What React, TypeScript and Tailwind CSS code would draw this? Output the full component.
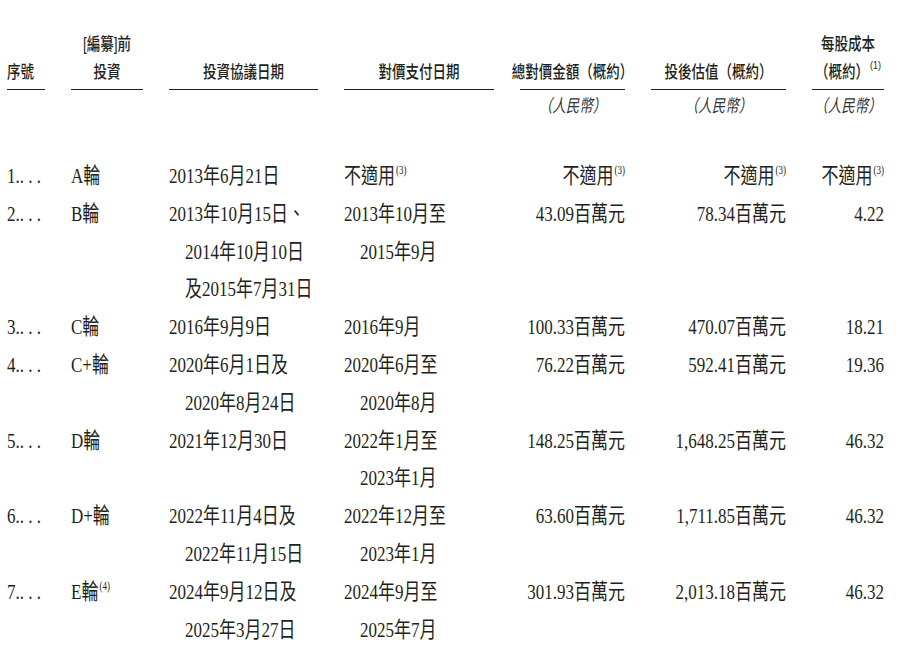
import type { ReactNode } from "react";

const serif = "font-['Liberation_Serif','Noto_Sans_CJK_TC',serif]";
const sans = "font-['Liberation_Sans','Noto_Sans_CJK_TC',sans-serif]";
const cols =
  "grid grid-cols-[38px_72px_149px_150px_105px_135px_72px] gap-x-[26px]";

function Sup({ children }: { children: ReactNode }) {
  return (
    <span className="relative -top-[7px] ml-px align-baseline text-[9px] font-normal leading-none">
      {children}
    </span>
  );
}

const na = (
  <>
    不適用<Sup>(3)</Sup>
  </>
);

type Row = {
  no: string;
  round: ReactNode;
  agree: string[];
  pay: ReactNode[];
  total: ReactNode;
  value: ReactNode;
  cost: ReactNode;
};

const rows: Row[] = [
  {
    no: "1",
    round: "A輪",
    agree: ["2013年6月21日"],
    pay: [na],
    total: na,
    value: na,
    cost: na,
  },
  {
    no: "2",
    round: "B輪",
    agree: ["2013年10月15日、", "2014年10月10日", "及2015年7月31日"],
    pay: ["2013年10月至", "2015年9月"],
    total: "43.09百萬元",
    value: "78.34百萬元",
    cost: "4.22",
  },
  {
    no: "3",
    round: "C輪",
    agree: ["2016年9月9日"],
    pay: ["2016年9月"],
    total: "100.33百萬元",
    value: "470.07百萬元",
    cost: "18.21",
  },
  {
    no: "4",
    round: "C+輪",
    agree: ["2020年6月1日及", "2020年8月24日"],
    pay: ["2020年6月至", "2020年8月"],
    total: "76.22百萬元",
    value: "592.41百萬元",
    cost: "19.36",
  },
  {
    no: "5",
    round: "D輪",
    agree: ["2021年12月30日"],
    pay: ["2022年1月至", "2023年1月"],
    total: "148.25百萬元",
    value: "1,648.25百萬元",
    cost: "46.32",
  },
  {
    no: "6",
    round: "D+輪",
    agree: ["2022年11月4日及", "2022年11月15日"],
    pay: ["2022年12月至", "2023年1月"],
    total: "63.60百萬元",
    value: "1,711.85百萬元",
    cost: "46.32",
  },
  {
    no: "7",
    round: (
      <>
        E輪<Sup>(4)</Sup>
      </>
    ),
    agree: ["2024年9月12日及", "2025年3月27日"],
    pay: ["2024年9月至", "2025年7月"],
    total: "301.93百萬元",
    value: "2,013.18百萬元",
    cost: "46.32",
  },
];

function HeadCell({ lines, left }: { lines: ReactNode[]; left?: boolean }) {
  return (
    <div className="flex flex-col justify-end border-b-[1.5px] border-[#231f20] pb-[2px]">
      {lines.map((l, i) => (
        <div
          key={i}
          className={`flex whitespace-nowrap leading-[28px] ${left ? "justify-start" : "justify-center"}`}
        >
          <span className="inline-block scale-y-[1.3]">{l}</span>
        </div>
      ))}
    </div>
  );
}

function Unit() {
  return (
    <div className="mt-[3px] flex justify-center font-normal leading-[28px] italic text-[#333]">
      <span className="inline-block scale-y-[1.3]">（人民幣）</span>
    </div>
  );
}

function Lines({ lines, right }: { lines: ReactNode[]; right?: boolean }) {
  return (
    <div className={right ? "text-right" : ""}>
      {lines.map((l, i) => (
        <div
          key={i}
          className={`whitespace-nowrap leading-[37.8px] ${i > 0 ? "pl-4" : ""}`}
        >
          <span className="inline-block scale-y-[1.28]">{l}</span>
        </div>
      ))}
    </div>
  );
}

export default function App() {
  return (
    <div className="h-[651px] w-[900px] overflow-hidden bg-white text-[#231f20]">
      <div className="pl-[7px] pt-[31px]">
        <div className={`${cols} ${sans} text-[13.5px] font-medium`}>
          <HeadCell lines={["序號"]} left />
          <HeadCell lines={["[編纂]前", "投資"]} />
          <HeadCell lines={["投資協議日期"]} />
          <HeadCell lines={["對價支付日期"]} />
          <HeadCell lines={["總對價金額（概約）"]} />
          <HeadCell lines={["投後估值（概約）"]} />
          <HeadCell
            lines={[
              "每股成本",
              <>
                （概約）<Sup>(1)</Sup>
              </>,
            ]}
          />
          <div />
          <div />
          <div />
          <div />
          <Unit />
          <Unit />
          <Unit />
        </div>

        <div className={`${cols} ${serif} mt-[37px] text-[17px]`}>
          {rows.map((r) => (
            <div key={r.no} className="contents">
              <Lines lines={[`${r.no}.. . .`]} />
              <Lines lines={[r.round]} />
              <Lines lines={r.agree} />
              <Lines lines={r.pay} />
              <Lines lines={[r.total]} right />
              <Lines lines={[r.value]} right />
              <Lines lines={[r.cost]} right />
            </div>
          ))}
        </div>
      </div>
    </div>
  );
}
